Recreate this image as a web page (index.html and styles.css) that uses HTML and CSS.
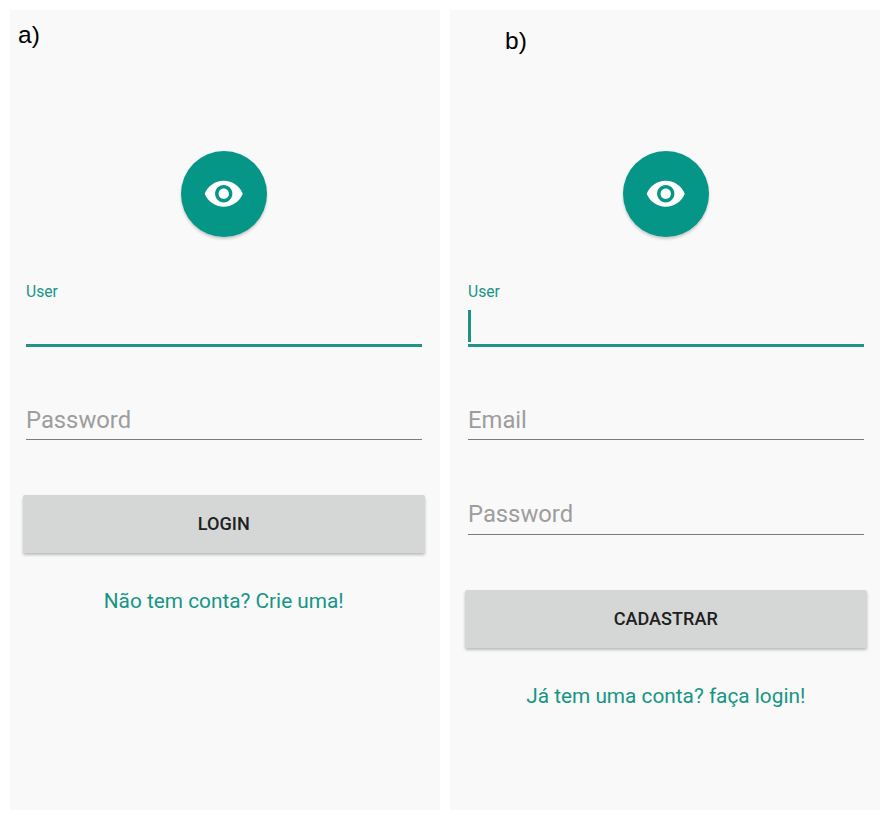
FILE: index.html
```html
<!DOCTYPE html>
<html lang="pt-BR">
<head>
<meta charset="utf-8">
<title>Login e cadastro</title>
<link rel="stylesheet" href="styles.css">
</head>
<body>
<main class="screens">
  <section class="screen screen-login">
    <div class="caption">a)</div>
    <form class="form">
      <div class="logo"><svg class="eye" viewBox="0 0 24 24"><path d="M12 4.500C7 4.500 2.730 7.610 1 12c1.730 4.390 6 7.500 11 7.500s9.270-3.110 11-7.500c-1.730-4.390-6-7.500-11-7.500zM12 17c-2.760 0-5-2.240-5-5s2.240-5 5-5 5 2.240 5 5-2.240 5-5 5zm0-8c-1.660 0-3 1.340-3 3s1.340 3 3 3 3-1.340 3-3-1.340-3-3-3z"/></svg></div>
      <div class="field field-active"><span class="label">User</span></div>
      <div class="field"><span class="hint">Password</span></div>
      <button class="button" type="button">LOGIN</button>
      <a class="link">Não tem conta? Crie uma!</a>
    </form>
  </section>
  <section class="screen screen-signup">
    <div class="caption">b)</div>
    <form class="form">
      <div class="logo"><svg class="eye" viewBox="0 0 24 24"><path d="M12 4.500C7 4.500 2.730 7.610 1 12c1.730 4.390 6 7.500 11 7.500s9.270-3.110 11-7.500c-1.730-4.390-6-7.500-11-7.500zM12 17c-2.760 0-5-2.240-5-5s2.240-5 5-5 5 2.240 5 5-2.240 5-5 5zm0-8c-1.660 0-3 1.340-3 3s1.340 3 3 3 3-1.340 3-3-1.340-3-3-3z"/></svg></div>
      <div class="field field-active"><span class="label">User</span><span class="caret"></span></div>
      <div class="field"><span class="hint">Email</span></div>
      <div class="field"><span class="hint">Password</span></div>
      <button class="button" type="button">CADASTRAR</button>
      <a class="link">Já tem uma conta? faça login!</a>
    </form>
  </section>
</main>
</body>
</html>
```
FILE: styles.css
```css
* {
  box-sizing: border-box;
}

body {
  margin: 0;
  background: #fff;
  font-family: Roboto, sans-serif;
}

.screens {
  display: flex;
  gap: 10px;
  padding: 10px;
}

.screen {
  width: 430px;
  height: 800px;
  background: #f9f9f9;
}

.caption {
  height: 141px;
  font: 24.5px/28px "Liberation Sans", sans-serif;
  color: #000;
}

.screen-login .caption {
  padding: 11px 0 0 8px;
}

.screen-signup .caption {
  padding: 17px 0 0 55px;
}

.form {
  display: flex;
  flex-direction: column;
  width: 395.5px;
  margin-left: 16px;
}

.screen-signup .form {
  margin-left: 18px;
}

.logo {
  display: flex;
  align-items: center;
  justify-content: center;
  align-self: center;
  width: 86px;
  height: 86px;
  border-radius: 50%;
  background: #059688;
  box-shadow: 0 2px 3px rgba(0, 0, 0, 0.2);
}

.eye {
  width: 41.5px;
  height: 41.5px;
  fill: #fff;
}

.field {
  display: flex;
  flex-direction: column;
  justify-content: flex-end;
  height: 93px;
  border-bottom: 1.4px solid #7c7c7c;
}

.screen-signup .field + .field + .field {
  height: 95px;
}

.screen-signup .field + .field + .field .hint {
  padding-bottom: 6px;
}

.field-active {
  justify-content: flex-start;
  height: 64px;
  margin-top: 46px;
  border-bottom: 3px solid #229485;
}

.label {
  font-size: 15.7px;
  line-height: 18px;
  color: #159584;
}

.caret {
  width: 2.5px;
  height: 32px;
  margin-top: 9px;
  background: #209282;
}

.hint {
  padding-bottom: 5px;
  font-size: 23.8px;
  line-height: 28px;
  color: #9d9d9d;
}

.button {
  height: 58px;
  margin: 55px -3px 0;
  padding: 0;
  border: 0;
  border-radius: 2px;
  background: #d5d7d6;
  box-shadow: 0 2px 3px rgba(0, 0, 0, 0.25);
  font: 500 18.1px/58px Roboto, sans-serif;
  color: #202020;
}

.screen-signup .button {
  margin-top: 54.5px;
}

.link {
  margin-top: 35px;
  font-size: 20.8px;
  line-height: 26px;
  text-align: center;
  color: #159584;
}
```
